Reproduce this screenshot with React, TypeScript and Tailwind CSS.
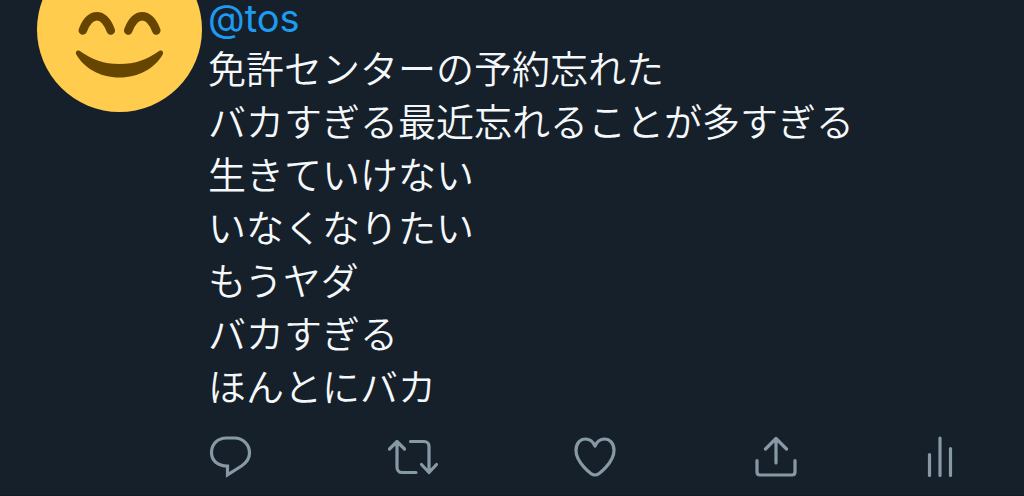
import type { ReactNode } from "react";

const lines = [
  "免許センターの予約忘れた",
  "バカすぎる最近忘れることが多すぎる",
  "生きていけない",
  "いなくなりたい",
  "もうヤダ",
  "バカすぎる",
  "ほんとにバカ",
];

function Avatar() {
  return (
    <svg viewBox="0 0 165 165" className="-mt-[53px] size-[165px] shrink-0" role="img" aria-label="Smiling face">
      <circle cx="82.5" cy="82.5" r="82.5" fill="#ffcc4d" />
      <g fill="none" stroke="#664500" strokeWidth="8.500" strokeLinecap="round">
        <path d="M45.800 83.500C49 75 54 69.300 60 69.300C66 69.300 70.500 75 73.800 83.500" />
        <path d="M91.200 83.500C94.500 75 99 69.300 105.200 69.300C111.500 69.300 116 75 119.300 83.500" />
      </g>
      <path
        d="M42.500 103.800C40.500 102.800 38 104.500 39.300 107.500C47 121 63 130.500 82.500 130.500C102 130.500 118 121 125.700 107.500C127 104.500 124.500 102.800 122.500 103.800C109 113 99 117 82.500 117C66 117 56 113 42.500 103.800Z"
        fill="#664500"
      />
    </svg>
  );
}

type ActionProps = { label: string; narrow?: boolean; children: ReactNode };

function Action({ label, narrow = false, children }: ActionProps) {
  return (
    <button type="button" aria-label={label} className="cursor-pointer">
      <svg
        viewBox={narrow ? "0 0 28 48" : "0 0 64 48"}
        className={narrow ? "h-12 w-7" : "h-12 w-16"}
        fill="none"
        stroke="#8899a6"
        strokeWidth="3.200"
        strokeLinecap="round"
        strokeLinejoin="round"
      >
        {children}
      </svg>
    </button>
  );
}

export default function App() {
  return (
    <div className="min-h-screen overflow-hidden border-b border-[#191826] bg-[#16202a] font-['Inter','Noto_Sans_CJK_JP',sans-serif]">
      <article className="flex gap-1.5 pr-[70px] pl-[37px]">
        <Avatar />
        <div className="min-w-0 flex-1">
          <a href="#tos" className="mb-[7px] block text-[38px] leading-9 text-[#1d9bf0]">
            @tos
          </a>
          <div className="text-[38px] leading-[53px] font-[350] text-[#f5f8fa]">
            {lines.map((line, i) => (
              <p key={i}>{line}</p>
            ))}
          </div>
          <div className="mt-4 -ml-[9px] flex justify-between">
            <Action label="Reply">
              <path
                d="M27.500 8H35.500C44 8 50.500 14.500 50.500 23C50.500 29 47 33 42.500 36L28.500 44.800V36C18.500 36 12.500 30.500 12.500 22.500C12.500 14 18.500 8 27.500 8Z"
                strokeLinejoin="miter"
              />
            </Action>
            <Action label="Retweet">
              <path d="M8.500 19L16 11.500L23.500 19M16 12V37C16 40 18 42.500 21 42.500H35M29.500 11.500H43C46 11.500 48 13.500 48 16.500V42M40.500 34.500L48 42.500L55.500 34.500" />
            </Action>
            <Action label="Like">
              <path d="M32 45C28 45 13 32 13 20.500C13 13 17.500 9 22.500 9C27 9 30 11.500 32 16C34 11.500 37 9 41.500 9C46.500 9 51 13 51 20.500C51 32 36 45 32 45Z" />
            </Action>
            <Action label="Share">
              <path d="M32 33V8.500M21.500 19L32 8.500L42.500 19M13 30.500V42C13 44 14 45 16 45H48C50 45 51 44 51 42V30.500" />
            </Action>
            <Action label="Analytics" narrow>
              <path d="M3.500 24.500V45.500M14 8V45.500M24.500 18.500V45.500" />
            </Action>
          </div>
        </div>
      </article>
    </div>
  );
}
